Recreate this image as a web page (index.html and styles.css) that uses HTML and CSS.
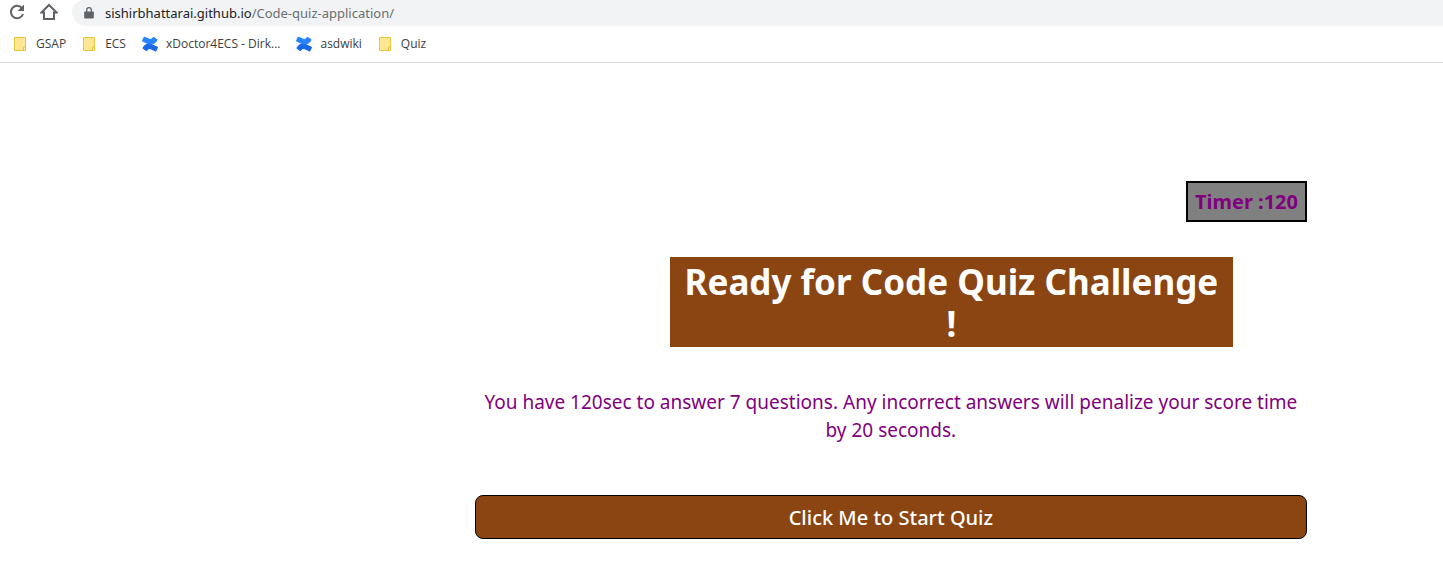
FILE: index.html
```html
<!DOCTYPE html>
<html lang="en">
<head>
<meta charset="utf-8">
<title>Code Quiz</title>
<link rel="stylesheet" href="styles.css">
</head>
<body>
<svg class="symbols" aria-hidden="true">
  <symbol id="note" viewBox="0 0 14 16">
    <path d="M1.500 1.500h11v13h-11z" fill="#ffe694" stroke="#e8c53f"/>
    <path d="M10.500 14.500v-3.500h2" fill="none" stroke="#e8c53f"/>
  </symbol>
  <symbol id="wiki" viewBox="0 0 16 16">
    <path d="M.6 11.800c-.2.400-.1.800.3 1l3.200 2.200c.4.200.8.100 1-.300 1.300-2.100 2.700-2 5.200-.800l3.100 1.500c.4.200.8 0 1-.400l1.500-3.300c.2-.400 0-.800-.4-1l-3.200-1.500C7.300 6.600 3.600 6.800.6 11.800z" fill="#1868e8"/>
    <path d="M15.400 4.200c.2-.400.1-.800-.3-1l-3.200-2.200c-.4-.2-.8-.1-1 .3-1.300 2.100-2.700 2-5.200.8L2.600.8c-.4-.2-.8 0-1 .4L.1 4.500c-.2.400 0 .8.400 1l3.200 1.500c5 2.400 8.700 2.200 11.700-2.800z" fill="#2684ff"/>
  </symbol>
</svg>
<header class="browser">
  <div class="toolbar">
    <button class="tool" aria-label="Reload">
      <svg width="18" height="18" viewBox="0 0 18 18"><path d="M14.300 5.600A6.200 6.200 0 1 0 15 11" fill="none" stroke="#5f6368" stroke-width="2"/><path d="M16 1.500v6.500h-6.500z" fill="#5f6368"/></svg>
    </button>
    <button class="tool" aria-label="Home">
      <svg width="18" height="18" viewBox="0 0 18 18"><path d="M1.500 9.500 9 2l7.500 7.500H14V16H4V9.500z" fill="none" stroke="#5f6368" stroke-width="2"/></svg>
    </button>
    <div class="address">
      <svg width="10" height="12" viewBox="0 0 10 12"><path d="M1 4.500h8q.8 0 .8.800v5.200q0 1-.8 1H1q-.8 0-.8-1V5.300q0-.8.800-.8z" fill="#5f6368"/><path d="M2.700 5V3a2.300 2.300 0 0 1 4.600 0v2" fill="none" stroke="#5f6368" stroke-width="1.300"/></svg>
      <span class="url">sishirbhattarai.github.io<span class="path">/Code-quiz-application/</span></span>
    </div>
  </div>
  <nav class="bookmarks">
    <a href="#"><svg class="note"><use href="#note"/></svg>GSAP</a>
    <a href="#"><svg class="note"><use href="#note"/></svg>ECS</a>
    <a href="#"><svg class="wiki"><use href="#wiki"/></svg>xDoctor4ECS - Dirk...</a>
    <a href="#"><svg class="wiki"><use href="#wiki"/></svg>asdwiki</a>
    <a href="#"><svg class="note"><use href="#note"/></svg>Quiz</a>
  </nav>
</header>
<main class="quiz">
  <div class="timer">Timer :120</div>
  <h1 class="title">Ready for Code Quiz Challenge !</h1>
  <p class="intro">You have 120sec to answer 7 questions. Any incorrect answers will penalize your score time by 20 seconds.</p>
  <button class="start">Click Me to Start Quiz</button>
</main>
</body>
</html>
```
FILE: styles.css
```css
* { box-sizing: border-box; }
body {
  margin: 0;
  background: #fff;
  font-family: "Comic Sans MS", "Noto Sans", sans-serif;
}
.symbols { position: absolute; width: 0; height: 0; }
.browser {
  font-family: "Segoe UI", "Open Sans", sans-serif;
  border-bottom: 1px solid #dadce0;
}
.toolbar {
  display: flex;
  align-items: flex-start;
  gap: 14px;
  height: 26px;
  padding-left: 8px;
}
.tool {
  display: flex;
  padding: 3px 0 0;
  border: 0;
  background: none;
}
.address {
  display: flex;
  align-items: center;
  gap: 11px;
  flex: 1;
  height: 26px;
  padding-left: 12px;
  border-radius: 12px 0 0 14px;
  background: #f1f3f4;
}
.url {
  color: #202124;
  font-family: "Segoe UI", "Noto Sans", sans-serif;
  font-size: 13px;
  line-height: 24px;
}
.path { color: #6b6f73; }
.bookmarks {
  display: flex;
  align-items: center;
  gap: 16px;
  height: 36px;
  padding-left: 13px;
}
.bookmarks a {
  display: flex;
  align-items: center;
  gap: 8px;
  color: #3c4043;
  font-size: 12px;
  line-height: 16px;
  text-decoration: none;
}
.note { width: 14px; height: 16px; margin-right: 1px; }
.wiki { width: 16px; height: 16px; }
.quiz {
  display: flex;
  flex-direction: column;
  margin: 118px 136px 24px 32.9%;
}
.timer {
  align-self: flex-end;
  padding: 7px;
  border: 2px solid #000;
  background: #808080;
  color: #800080;
  font-size: 20px;
  font-weight: bold;
  line-height: 23px;
}
.title {
  margin: 35px 74px 0 195px;
  padding: 4px 8px 2px;
  background: #8b4513;
  color: #fff;
  font-size: 35px;
  line-height: 42px;
  text-align: center;
}
.intro {
  margin: 41px 0 51px;
  color: #800080;
  font-size: 19px;
  line-height: 28px;
  text-align: center;
}
.start {
  height: 44px;
  border: 1px solid #000;
  border-radius: 8px;
  background: #8b4513;
  color: #fff;
  font-family: inherit;
  font-size: 20px;
  font-weight: 500;
}
```
